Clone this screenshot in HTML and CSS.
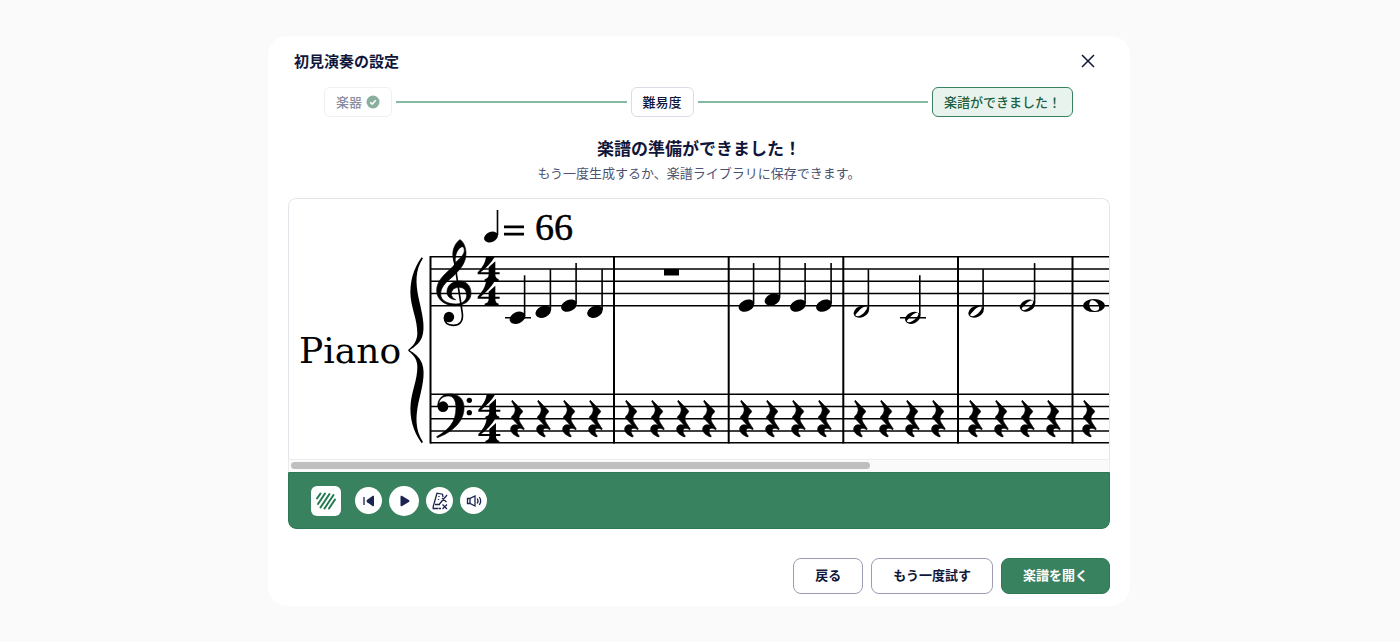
FILE: index.html
```html
<!DOCTYPE html>
<html lang="ja">
<head>
<meta charset="utf-8">
<meta name="viewport" content="width=device-width, initial-scale=1">
<title>初見演奏の設定</title>
<link rel="stylesheet" href="styles.css">
</head>
<body>
<main class="dialog" role="dialog" aria-labelledby="dialog-title">
  <header class="dialog-header">
    <h1 class="dialog-title" id="dialog-title">初見演奏の設定</h1>
    <button class="close" type="button" aria-label="閉じる">
      <svg width="16" height="16" viewBox="0 0 16 16"><path d="M2 2L14 14M14 2L2 14"/></svg>
    </button>
  </header>

  <ol class="steps">
    <li class="step step-done">楽器
      <svg width="14" height="14" viewBox="0 0 14 14"><circle cx="7" cy="7" r="6.5"/><path d="M4.2 7.2L6.2 9.1L9.8 5.3"/></svg>
    </li>
    <li class="step-line" aria-hidden="true"></li>
    <li class="step">難易度</li>
    <li class="step-line" aria-hidden="true"></li>
    <li class="step step-current" aria-current="step">楽譜ができました！</li>
  </ol>

  <h2 class="heading">楽譜の準備ができました！</h2>
  <p class="subtitle">もう一度生成するか、楽譜ライブラリに保存できます。</p>

  <section class="player">
    <div class="score">
      <svg class="score-sheet" width="1155" height="260" viewBox="289 199 1155 260">
        <defs>
          <ellipse id="head" rx="8.2" ry="5.7" transform="rotate(-24)"/>
          <g id="quarter"><use href="#head"/><path class="stem" d="M7.1 -2V-42.5"/></g>
          <g id="half">
            <path fill-rule="evenodd" transform="rotate(-24)" d="M-8 0A8 5.6 0 1 1 8 0A8 5.6 0 1 1 -8 0ZM-6.8 1.1C-6 3.6 -1 3.6 3 1.6C6.5 0 7.4 -1.4 6.6 -2.4C5 -4.2 1 -3 -2.6 -1.5C-5.6 -0.2 -7 0.2 -6.8 1.1Z"/>
            <path class="stem" d="M7.1 -2V-42.5"/>
          </g>
          <g id="four"><path d="M258 81L284 81C274 98 258 115 242 127L266 127L266 112L286 94L286 127L299 127L299 133L286 133C286 142 289 146 296 148L296 153L254 153L254 148C262 146 266 142 266 133L233 133L233 127C246 114 256 98 258 81Z"/></g>
          <path id="rest" class="glyph" d="M337 61L367 92C369 95 367 97 365 99C355 109 355 118 361 129L373 147L371 149C360 142 351 144 351 153C351 160 355 165 358 168L356 171C343 166 331 157 332 146C333 136 343 131 355 136L336 115C333 112 334 110 337 108C347 97 348 88 341 74L335 64Z" transform="scale(.3333) translate(-351 0)"/>
          <g id="rests"><use href="#rest"/><use href="#rest" x="26"/><use href="#rest" x="52"/><use href="#rest" x="78"/></g>
        </defs>

        <text class="part-name" x="299" y="363">Piano</text>
        <text class="tempo" x="535" y="240">66</text>
        <path d="M504 225.5H524V228.3H504ZM504 232.7H524V235.5H504Z"/>
        <ellipse cx="491" cy="237" rx="7.2" ry="5" transform="rotate(-22 491 237)"/>
        <path class="stem" d="M497.5 235V210"/>

        <path class="staff" d="M430 256.7H1444M430 269H1444M430 281.2H1444M430 293.5H1444M430 305.7H1444M430 394.3H1444M430 406.5H1444M430 418.7H1444M430 431H1444M430 442.7H1444"/>
        <path class="bar" d="M430.5 256V443.5M614 256V443.5M728.7 256V443.5M843.3 256V443.5M958 256V443.5M1072.5 256V443.5"/>

        <path transform="translate(400 250) scale(.3333)" d="M65 22L69 25C45 60 47 100 55 140C65 185 78 230 66 262C58 282 42 292 29 301C42 310 58 320 66 340C78 372 65 417 55 460C47 500 45 540 69 576L65 580C40 545 28 505 32 460C36 420 52 390 52 350C52 330 42 315 25 303L25 299C42 287 52 270 52 250C52 210 36 180 32 142C28 100 40 55 65 22Z"/>

        <g transform="translate(400 230) scale(.3333)">
          <path class="glyph" fill-rule="evenodd" d="M180 29C190 34 198 52 198 70C198 98 182 118 158 140C136 158 122 172 122 192C122 212 142 222 168 222C192 222 200 208 200 196C200 180 190 172 178 172C164 172 154 180 154 191C154 200 160 206 167 209C152 208 141 200 141 186C141 166 158 153 178 153C200 153 213 168 213 190C213 212 194 227 164 227C132 227 110 206 110 182C110 156 128 138 148 120C158 111 163 106 164 102C158 82 157 72 160 60C163 46 172 34 180 29ZM187 50C176 52 163 72 166 98C180 86 192 74 193 62C193 54 190 50 187 50Z"/>
          <path class="clef-stem" d="M162 85L187 250C190 275 178 286 160 286C142 286 133 276 133 262"/>
          <circle cx="147" cy="261" r="15.5"/>
          <use href="#four"/><use href="#four" y="73"/>
        </g>

        <g transform="translate(400 380) scale(.3333)">
          <path class="glyph" d="M113 80C113 56 128 42 149 42C178 42 192 58 192 84C192 124 158 156 112 173L110 170C146 150 168 126 168 84C168 60 160 48 146 48C130 48 118 56 117 70Z"/>
          <circle cx="129" cy="80" r="16"/>
          <circle cx="208" cy="61" r="8"/><circle cx="208" cy="98" r="8"/>
          <use href="#four" x="2" y="-38"/><use href="#four" x="2" y="35"/>
        </g>

        <path class="ledger" d="M505 317.8H531M900 317.8H926"/>
        <use href="#quarter" x="517.5" y="317.8"/>
        <use href="#quarter" x="543.3" y="311.7"/>
        <use href="#quarter" x="569" y="305.6"/>
        <use href="#quarter" x="595" y="311.7"/>
        <path d="M664 269H679V275.5H664Z"/>
        <use href="#quarter" x="746.5" y="305.6"/>
        <use href="#quarter" x="772.5" y="299.5"/>
        <use href="#quarter" x="798" y="305.6"/>
        <use href="#quarter" x="824" y="305.6"/>
        <use href="#half" x="861.3" y="311.7"/>
        <use href="#half" x="912.7" y="317.8"/>
        <use href="#half" x="976" y="311.7"/>
        <use href="#half" x="1027.5" y="305.6"/>
        <path fill-rule="evenodd" d="M1083 305.6A11 6.5 0 1 1 1105 305.6A11 6.5 0 1 1 1083 305.6ZM1089.5 303C1088.5 306.5 1091 311 1095 311C1099 311 1100 308 1098.5 305C1097 301.5 1094 300 1092 300.2C1090.5 300.5 1090 301.5 1089.5 303Z"/>

        <use href="#rests" x="517" y="380"/>
        <use href="#rests" x="631" y="380"/>
        <use href="#rests" x="746" y="380"/>
        <use href="#rests" x="860" y="380"/>
        <use href="#rests" x="975" y="380"/>
        <use href="#rest" x="1089" y="380"/>
      </svg>
    </div>
    <div class="scroll-track" aria-hidden="true"><div class="scroll-thumb"></div></div>
    <div class="controls">
      <button class="control control-logo" type="button" aria-label="プレーヤー">
        <svg width="22" height="22" viewBox="0 0 22 22"><path d="M2 8.500L5.500 3.500M3 14L10 3.500M5.500 17.500L14.500 4M9.500 18.500L18.500 5M14 18.500L20 9.500"/></svg>
      </button>
      <button class="control" type="button" aria-label="最初に戻る">
        <svg class="icon-solid" width="18" height="18" viewBox="0 0 18 18"><path d="M4 5V13"/><path class="fill" d="M14 5V13C14 14.200 13.300 14.500 12.500 14L7.200 10.200C6.300 9.500 6.300 8.500 7.200 7.800L12.500 4C13.300 3.500 14 3.800 14 5Z"/></svg>
      </button>
      <button class="control control-play" type="button" aria-label="再生">
        <svg class="icon-solid" width="18" height="18" viewBox="0 0 18 18"><path class="fill" d="M5.500 5V13C5.500 14.200 6.300 14.600 7.200 14L13.800 10C14.700 9.400 14.700 8.600 13.800 8L7.200 4C6.300 3.400 5.500 3.800 5.500 5Z"/></svg>
      </button>
      <button class="control" type="button" aria-label="メトロノームをオフ">
        <svg class="icon-line" width="18" height="18" viewBox="0 0 18 18"><path d="M12 5L11.5 2.2L6 1.2L2.2 14.5V16.5H7.5M4 12.500H9M16 3L8.500 12M11 6L15.500 10M8 4V5M7.500 7V8M10 16.500H8M11.500 12.500L16 17M16 12.500L11.500 17"/></svg>
      </button>
      <button class="control" type="button" aria-label="音量">
        <svg class="icon-line" width="18" height="18" viewBox="0 0 18 18"><path d="M5 6.500H2.500V11.500H5L10 14V4L5 6.500V11.500M12.200 6.500C13.200 8 13.200 10 12.200 11.500M14.300 5C16 7.500 16 10.500 14.300 13"/></svg>
      </button>
    </div>
  </section>

  <footer class="actions">
    <button class="button" type="button">戻る</button>
    <button class="button" type="button">もう一度試す</button>
    <button class="button button-primary" type="button">楽譜を開く</button>
  </footer>
</main>
</body>
</html>
```
FILE: styles.css
```css
* {
  box-sizing: border-box;
}

body {
  margin: 0;
  padding: 36px 21px 36px 19px;
  background: #fafafa;
  color: #10163a;
  font-family: "Noto Sans CJK JP", sans-serif;
  font-size: 13px;
}

button {
  margin: 0;
  padding: 0;
  border: 0;
  background: none;
  color: inherit;
  font: inherit;
  cursor: pointer;
}

.dialog {
  display: flex;
  flex-direction: column;
  max-width: 862px;
  margin: 0 auto;
  padding: 11px 20px 12px;
  border-radius: 20px;
  background: #fff;
}

.dialog-header {
  display: flex;
  align-items: center;
  justify-content: space-between;
  height: 28px;
  padding: 0 14px 0 6px;
}

.dialog-title {
  margin: 0;
  font-size: 15px;
  line-height: 24px;
}

.close {
  display: flex;
}

.close path {
  stroke: #10163a;
  stroke-width: 1.5;
}

.steps {
  display: flex;
  align-items: center;
  gap: 4px;
  margin: 12px 37px 0 36px;
  padding: 0;
  list-style: none;
}

.step {
  display: flex;
  align-items: center;
  gap: 4px;
  padding: 4px 11px;
  border: 1px solid #dcdce6;
  border-radius: 6px;
  font-weight: 500;
  line-height: 20px;
}

.step-done {
  border-color: #f0f0f3;
  color: #8a8d9e;
}

.step-done circle {
  fill: #8aaf9f;
}

.step-done path {
  fill: none;
  stroke: #fff;
  stroke-width: 1.5;
}

.step-current {
  border-color: #39825f;
  background: #e8f3ed;
  color: #1c5f41;
}

.step-line {
  flex: 1;
  height: 2px;
  background: #85baa0;
}

.heading {
  margin: 19px 0 3px;
  font-size: 17px;
  line-height: 24px;
  text-align: center;
}

.subtitle {
  margin: 0 0 15px;
  color: #4d5270;
  line-height: 20px;
  text-align: center;
}

.player {
  overflow: hidden;
  border-radius: 8px;
}

.score {
  overflow: hidden;
  border: 1px solid #e3e3ea;
  border-bottom: 0;
  border-radius: 8px 8px 0 0;
}

.score-sheet {
  display: block;
}

.part-name {
  font-family: "DejaVu Serif", serif;
  font-size: 36px;
}

.tempo {
  font-family: "Liberation Serif", serif;
  font-size: 38px;
  stroke: #000;
  stroke-width: 0.5;
}

.stem,
.staff,
.ledger {
  stroke: #000;
  stroke-width: 1.6;
}

.bar {
  stroke: #000;
  stroke-width: 2;
}

.glyph {
  stroke: #000;
  stroke-width: 2;
}

.clef-stem {
  fill: none;
  stroke: #000;
  stroke-width: 5;
}

.scroll-track {
  height: 13px;
  padding: 2px;
  border: 1px solid #ececef;
  border-bottom: 0;
  background: #fafafa;
}

.scroll-thumb {
  width: 71%;
  height: 7px;
  border-radius: 4px;
  background: #bfbfbf;
}

.controls {
  display: flex;
  align-items: center;
  gap: 7px;
  height: 57px;
  padding: 0 22px;
  border: 1px solid #2b7a54;
  border-radius: 0 0 8px 8px;
  background: #39825f;
}

.control {
  display: flex;
  align-items: center;
  justify-content: center;
  width: 27px;
  height: 27px;
  border-radius: 50%;
  background: #fff;
}

.control-play {
  width: 30px;
  height: 30px;
}

.control-logo {
  width: 30px;
  height: 30px;
  margin-right: 7px;
  border-radius: 6px;
}

.control-logo path {
  fill: none;
  stroke: #1f7a4d;
  stroke-width: 2;
  stroke-linecap: round;
}

.icon-solid path,
.icon-line path {
  fill: none;
  stroke: #1b2350;
  stroke-width: 1.3;
}

.icon-solid .fill {
  fill: #1b2350;
  stroke: none;
}

.actions {
  display: flex;
  justify-content: flex-end;
  gap: 8px;
  margin-top: 29px;
}

.button {
  padding: 5px 21px 7px;
  border: 1px solid #9a9db3;
  border-radius: 8px;
  font-weight: 700;
  line-height: 22px;
}

.button-primary {
  border-color: #2b7a54;
  background: #39825f;
  color: #fff;
}
```
